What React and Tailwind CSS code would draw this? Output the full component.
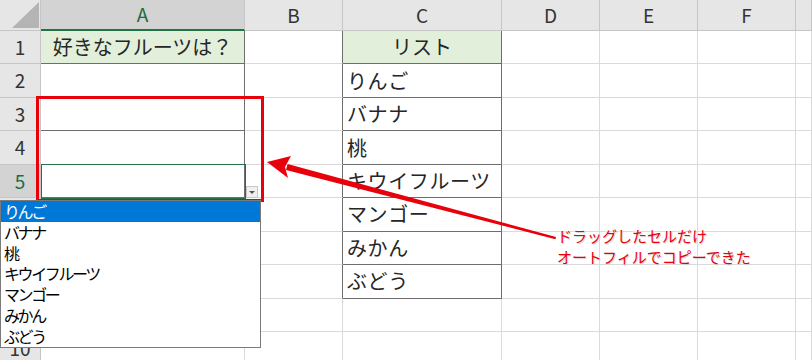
import React from 'react';

const COLS = [
  { key: 'A', w: 204 },
  { key: 'B', w: 98 },
  { key: 'C', w: 159 },
  { key: 'D', w: 98 },
  { key: 'E', w: 98 },
  { key: 'F', w: 98 },
  { key: 'G', w: 16, label: '' },
];

const ROWS = [1, 2, 3, 4, 5, 6, 7, 8, 9, 10];

// cell contents: [text, align, header-fill]
const CELLS = {
  A1: ['好きなフルーツは？', 'center', true],
  C1: ['リスト', 'center', true],
  C2: ['りんご'],
  C3: ['バナナ'],
  C4: ['桃'],
  C5: ['キウイフルーツ'],
  C6: ['マンゴー'],
  C7: ['みかん'],
  C8: ['ぶどう'],
};

const boxed = (c, r) => (c === 'A' && r >= 1 && r <= 5) || (c === 'C' && r >= 1 && r <= 8);

const LIST = ['りんご', 'バナナ', '桃', 'キウイフルーツ', 'マンゴー', 'みかん', 'ぶどう'];

const font = { fontFamily: '"Noto Sans CJK JP", "Noto Sans", sans-serif' };

function Cell({ col, colIdx, row }) {
  const id = col.key + row;
  const cell = CELLS[id];
  const next = COLS[colIdx + 1];
  const darkRight = boxed(col.key, row) || (next && boxed(next.key, row));
  const darkBottom = boxed(col.key, row) || boxed(col.key, row + 1);
  return (
    <div
      className={
        'flex items-center overflow-visible whitespace-nowrap border-r border-b text-[20px] text-[#262626] ' +
        (darkRight ? 'border-r-[#6e6e6e] ' : 'border-r-[#dadada] ') +
        (darkBottom ? 'border-b-[#6e6e6e] ' : 'border-b-[#dadada] ') +
        (cell && cell[2] ? 'bg-[#e2efda] ' : 'bg-white ') +
        (cell && cell[1] === 'center' ? 'justify-center tracking-[0px]' : 'justify-start pl-[4px] tracking-[0.6px]')
      }
    >
      {cell ? cell[0] : ''}
    </div>
  );
}

export default function App() {
  return (
    <div className="relative w-[812px] h-[360px] overflow-hidden bg-white select-none" style={font}>
      <div className="grid grid-cols-[41px_204px_98px_159px_98px_98px_98px_16px] grid-rows-[31px_repeat(10,33.45px)]">
        {/* corner */}
        <div className="flex items-end justify-end pr-[1px] pb-[2px] bg-[#e6e6e6] border-r border-b border-[#c6c6c6]">
          <div className="w-0 h-0 border-l-[27px] border-l-transparent border-b-[26px] border-b-[#b4b4b4]" />
        </div>
        {COLS.map((c) => (
          <div
            key={c.key}
            className={
              'flex items-center justify-center border-r text-[19px] ' +
              (c.key === 'A'
                ? 'bg-[#d3d3d3] text-[#1e6c41] border-r-[#c6c6c6] border-b-2 border-b-[#217346]'
                : 'bg-[#e6e6e6] text-[#333] border-b border-[#c6c6c6]')
            }
          >
            {c.label === '' ? '' : c.key}
          </div>
        ))}
        {ROWS.map((r) => (
          <React.Fragment key={r}>
            <div
              className={
                'flex items-center justify-center border-r border-b text-[19px] ' +
                (r === 5
                  ? 'bg-[#d3d3d3] text-[#1e6c41] border-[#c6c6c6]'
                  : 'bg-[#e6e6e6] text-[#333] border-[#c6c6c6]')
              }
            >
              {r}
            </div>
            {COLS.map((c, i) => (
              <Cell key={c.key + r} col={c} colIdx={i} row={r} />
            ))}
          </React.Fragment>
        ))}
      </div>

      {/* active cell A5 */}
      <div className="absolute left-[41px] top-[164px] w-[205px] h-[35px] border border-[#217346] pointer-events-none" />
      {/* dropdown button */}
      <div className="absolute left-[246px] top-[186px] w-[12px] h-[12px] bg-[#f0f0f0] border border-[#c8c8c8] flex items-center justify-center">
        <div className="w-0 h-0 border-l-[3px] border-r-[3px] border-t-[3px] border-l-transparent border-r-transparent border-t-[#555]" />
      </div>

      {/* red frame over A3:A5 */}
      <div className="absolute left-[36px] top-[96px] w-[228px] h-[106px] border-[3px] border-[#e8000b] pointer-events-none" />

      {/* validation list */}
      <div className="absolute left-0 top-[200px] w-[261px] h-[148px] flex flex-col bg-white border border-[#7a7a7a]">
        {LIST.map((t, i) => (
          <div
            key={t}
            className={
              'h-[20.8px] leading-[20.8px] pl-[3px] text-[16px] tracking-[-2.4px] ' +
              (i === 0 ? 'bg-[#0078d7] text-white' : 'text-black')
            }
          >
            {t}
          </div>
        ))}
      </div>

      {/* arrow */}
      <svg className="absolute left-0 top-0 pointer-events-none" width="812" height="360" viewBox="0 0 812 360">
        <polygon points="556,237 555.4,239.3 286,170 287.6,164" fill="#e8000b" />
        <polygon points="267,162 291,156 285,167 288,178" fill="#e8000b" />
      </svg>

      {/* annotation */}
      <div className="absolute left-[557px] top-[225px] text-[15px] leading-[21px] text-[#e8000b] [text-shadow:1px_1px_1px_#d0d0d0,-1px_-1px_1px_#ffffff]">
        <div>ドラッグしたセルだけ</div>
        <div>オートフィルでコピーできた</div>
      </div>
    </div>
  );
}
